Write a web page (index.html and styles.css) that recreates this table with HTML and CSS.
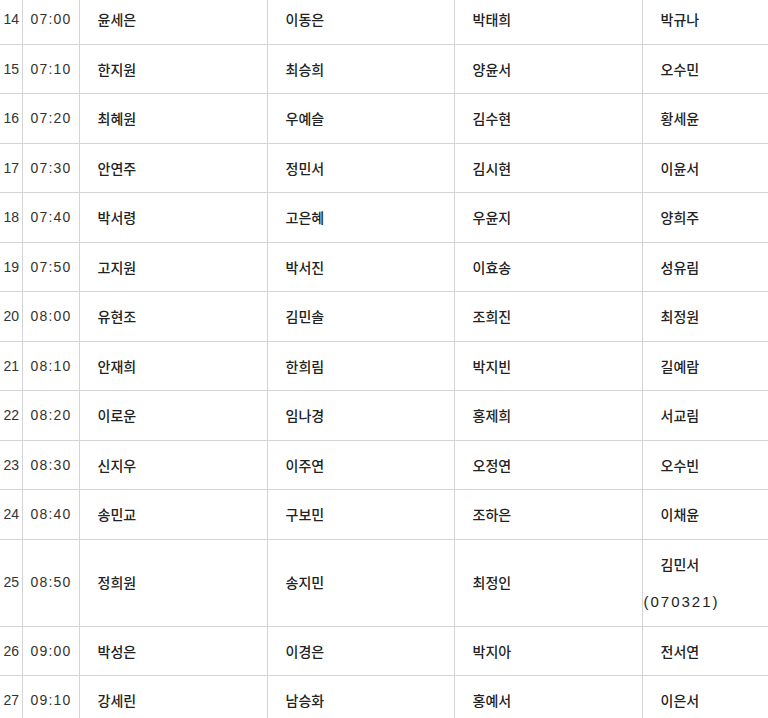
FILE: index.html
```html
<!DOCTYPE html>
<html lang="ko">
<head>
<meta charset="utf-8">
<link rel="stylesheet" href="styles.css">
</head>
<body>
<table class="roster">
<colgroup>
<col class="c-no"><col class="c-time"><col class="c-a"><col class="c-b"><col class="c-c"><col class="c-last">
</colgroup>
<tbody>
<tr><td class="no">14</td><td class="time">07:00</td><td class="nm">윤세은</td><td class="nm">이동은</td><td class="nm">박태희</td><td class="nm">박규나</td></tr>
<tr><td class="no">15</td><td class="time">07:10</td><td class="nm">한지원</td><td class="nm">최승희</td><td class="nm">양윤서</td><td class="nm">오수민</td></tr>
<tr><td class="no">16</td><td class="time">07:20</td><td class="nm">최혜원</td><td class="nm">우예슬</td><td class="nm">김수현</td><td class="nm">황세윤</td></tr>
<tr><td class="no">17</td><td class="time">07:30</td><td class="nm">안연주</td><td class="nm">정민서</td><td class="nm">김시현</td><td class="nm">이윤서</td></tr>
<tr><td class="no">18</td><td class="time">07:40</td><td class="nm">박서령</td><td class="nm">고은혜</td><td class="nm">우윤지</td><td class="nm">양희주</td></tr>
<tr><td class="no">19</td><td class="time">07:50</td><td class="nm">고지원</td><td class="nm">박서진</td><td class="nm">이효송</td><td class="nm">성유림</td></tr>
<tr><td class="no">20</td><td class="time">08:00</td><td class="nm">유현조</td><td class="nm">김민솔</td><td class="nm">조희진</td><td class="nm">최정원</td></tr>
<tr><td class="no">21</td><td class="time">08:10</td><td class="nm">안재희</td><td class="nm">한희림</td><td class="nm">박지빈</td><td class="nm">길예람</td></tr>
<tr><td class="no">22</td><td class="time">08:20</td><td class="nm">이로운</td><td class="nm">임나경</td><td class="nm">홍제희</td><td class="nm">서교림</td></tr>
<tr><td class="no">23</td><td class="time">08:30</td><td class="nm">신지우</td><td class="nm">이주연</td><td class="nm">오정연</td><td class="nm">오수빈</td></tr>
<tr><td class="no">24</td><td class="time">08:40</td><td class="nm">송민교</td><td class="nm">구보민</td><td class="nm">조하은</td><td class="nm">이채윤</td></tr>
<tr><td class="no">25</td><td class="time">08:50</td><td class="nm">정희원</td><td class="nm">송지민</td><td class="nm">최정인</td><td class="nm">김민서<br><span class="code">(070321)</span></td></tr>
<tr><td class="no">26</td><td class="time">09:00</td><td class="nm">박성은</td><td class="nm">이경은</td><td class="nm">박지아</td><td class="nm">전서연</td></tr>
<tr><td class="no">27</td><td class="time">09:10</td><td class="nm">강세린</td><td class="nm">남승화</td><td class="nm">홍예서</td><td class="nm">이은서</td></tr>
</tbody>
</table>
</body>
</html>
```
FILE: styles.css
```css
html, body {
  margin: 0;
  padding: 0;
  background: #fff;
  overflow: hidden;
}
.roster {
  border-collapse: collapse;
  table-layout: fixed;
  width: 768px;
  margin-top: -5px;
  font-family: "Noto Sans CJK KR", "DejaVu Sans", sans-serif;
  font-size: 14px;
  font-weight: 500;
  color: #222;
}
.c-no { width: 22px; }
.c-time { width: 57px; }
.c-a { width: 188px; }
.c-b { width: 187px; }
.c-c { width: 188px; }
.c-last { width: 126px; }
.roster td {
  border: 1px solid #d4d4d4;
  padding: 6px 0 5px 1px;
  line-height: 37.5px;
  vertical-align: middle;
  white-space: nowrap;
  overflow: hidden;
}
.roster tr td:first-child { border-left: none; }
.roster tr td:last-child { border-right: none; }
.roster tr:first-child td { border-top: none; }
.no, .time {
  font-family: "Liberation Sans", sans-serif;
  font-weight: normal;
  color: #333;
  text-align: center;
  padding-left: 0;
  letter-spacing: 1.2px;
}
.no { letter-spacing: 0; }
.nm {
  text-indent: 17px;
  text-align: left;
}
.code {
  font-family: "Liberation Sans", sans-serif;
  font-size: 15px;
  letter-spacing: 2px;
}
```
